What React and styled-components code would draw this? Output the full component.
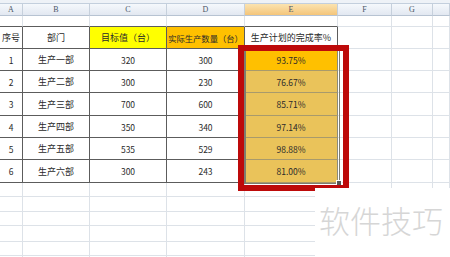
import React from 'react';
import styled, { createGlobalStyle } from 'styled-components';

const GlobalStyle = createGlobalStyle`
  html, body {
    margin: 0;
    padding: 0;
    background: #fff;
  }
  body {
    font-family: "Noto Sans CJK SC", "Liberation Sans", sans-serif;
  }
`;

const COLS = '23px 67px 77px 78px 93px 54px 41px 1fr';
const DARK = '#5c5c5c';
const LIGHT = '#dde2e8';

const rows = [
  ['1', '生产一部', '320', '300', '93.75%'],
  ['2', '生产二部', '300', '230', '76.67%'],
  ['3', '生产三部', '700', '600', '85.71%'],
  ['4', '生产四部', '350', '340', '97.14%'],
  ['5', '生产五部', '535', '529', '98.88%'],
  ['6', '生产六部', '300', '243', '81.00%'],
];
const rowHeights = [22, 22, 23, 22, 22, 23];
const blankHeights = [14, 15, 14, 16, 14, 14];

const Sheet = () => {
  return (
    <Page>
      <TopStrip />
      <HeaderRow>
        {['A', 'B', 'C', 'D', 'E', 'F', 'G', ''].map((l, i) => (
          <ColHead key={i} $active={l === 'E'}>{l}</ColHead>
        ))}
      </HeaderRow>
      <Row $h={11}>
        {[0, 1, 2, 3, 4].map(i => (
          <Cell key={i} $bottom={DARK} $right={LIGHT} />
        ))}
        <Cell />
        <Cell />
        <Cell />
      </Row>
      <Row $h={22}>
        <Cell $right={DARK} $bottom={DARK}>序号</Cell>
        <Cell $right={DARK} $bottom={DARK}>部门</Cell>
        <Cell $right={DARK} $bottom={DARK} $bg="#ffff00">目标值（台）</Cell>
        <Cell $right={DARK} $bottom={DARK} $bg="#ffc000" $size={8.3}>
          实际生产数量（台）
        </Cell>
        <Cell $right={DARK} $bottom={DARK}>生产计划的完成率%</Cell>
        <Cell />
        <Cell />
        <Cell />
      </Row>
      {rows.map((r, i) => (
        <Row key={i} $h={rowHeights[i]}>
          <Cell $right={DARK} $bottom={DARK} $num>{r[0]}</Cell>
          <Cell $right={DARK} $bottom={DARK}>{r[1]}</Cell>
          <Cell $right={DARK} $bottom={DARK} $num>{r[2]}</Cell>
          <Cell $right={DARK} $bottom={DARK} $num>{r[3]}</Cell>
          <Cell
            $right="#8a8a7a"
            $bottom="#a89a6c"
            $bg={i === 0 ? '#ffc000' : '#eac35a'}
            $num
          >
            {r[4]}
          </Cell>
          <Cell />
          <Cell />
          <Cell />
        </Row>
      ))}
      {blankHeights.map((h, i) => (
        <Row key={'b' + i} $h={h}>
          {[0, 1, 2, 3, 4, 5, 6, 7].map(j => (
            <Cell key={j} />
          ))}
        </Row>
      ))}

      <Selection>
        <FillHandle />
      </Selection>
      <RedBox />
      <Watermark>软件技巧</Watermark>
    </Page>
  );
};

const App = () => (
  <>
    <GlobalStyle />
    <Sheet />
  </>
);

const Page = styled.div`
  position: relative;
  width: 450px;
  height: 257px;
  overflow: hidden;
  background: #fff;
`;

const TopStrip = styled.div`
  height: 3px;
  background: #eef2f7;
  border-bottom: 1px solid #c3cfdd;
`;

const HeaderRow = styled.div`
  display: grid;
  grid-template-columns: ${COLS};
  height: 12px;
`;

const ColHead = styled.div`
  box-sizing: border-box;
  display: flex;
  align-items: center;
  justify-content: center;
  font-family: "Liberation Serif", serif;
  font-size: 8px;
  color: #4a5566;
  border-right: 1px solid #c6d0dc;
  border-bottom: 1px solid #b7c3d2;
  background: ${p =>
    p.$active
      ? 'linear-gradient(#fbe3b0, #f4c57a)'
      : 'linear-gradient(#f5f8fc, #e2e8f1)'};
`;

const Row = styled.div`
  display: grid;
  grid-template-columns: ${COLS};
  height: ${p => p.$h}px;
`;

const Cell = styled.div`
  box-sizing: border-box;
  display: flex;
  align-items: center;
  justify-content: center;
  white-space: nowrap;
  overflow: hidden;
  font-size: ${p => (p.$size ? `${p.$size}px` : p.$num ? '8.5px' : '9px')};
  color: #2a2a2a;
  background: ${p => p.$bg || '#fff'};
  border-right: 1px solid ${p => p.$right || LIGHT};
  border-bottom: 1px solid ${p => p.$bottom || LIGHT};
`;

const Selection = styled.div`
  position: absolute;
  left: 244px;
  top: 49px;
  width: 96px;
  height: 135px;
  box-sizing: border-box;
  border: 1px solid #7d7d70;
  border-left-width: 2px;
`;

const FillHandle = styled.div`
  position: absolute;
  right: -3px;
  bottom: -3px;
  width: 4px;
  height: 4px;
  background: #555;
  border: 1px solid #fff;
`;

const RedBox = styled.div`
  position: absolute;
  left: 238px;
  top: 45px;
  width: 111px;
  height: 146px;
  box-sizing: border-box;
  border: 6px solid #bd0a0a;
`;

const Watermark = styled.div`
  position: absolute;
  left: 315px;
  top: 188px;
  right: 0;
  bottom: 0;
  background: #fff;
  padding: 14px 0 0 4px;
  font-family: "Noto Sans CJK SC", sans-serif;
  font-size: 31px;
  font-weight: 300;
  line-height: 36px;
  color: #d6d6d6;
  white-space: nowrap;
`;

export default App;
